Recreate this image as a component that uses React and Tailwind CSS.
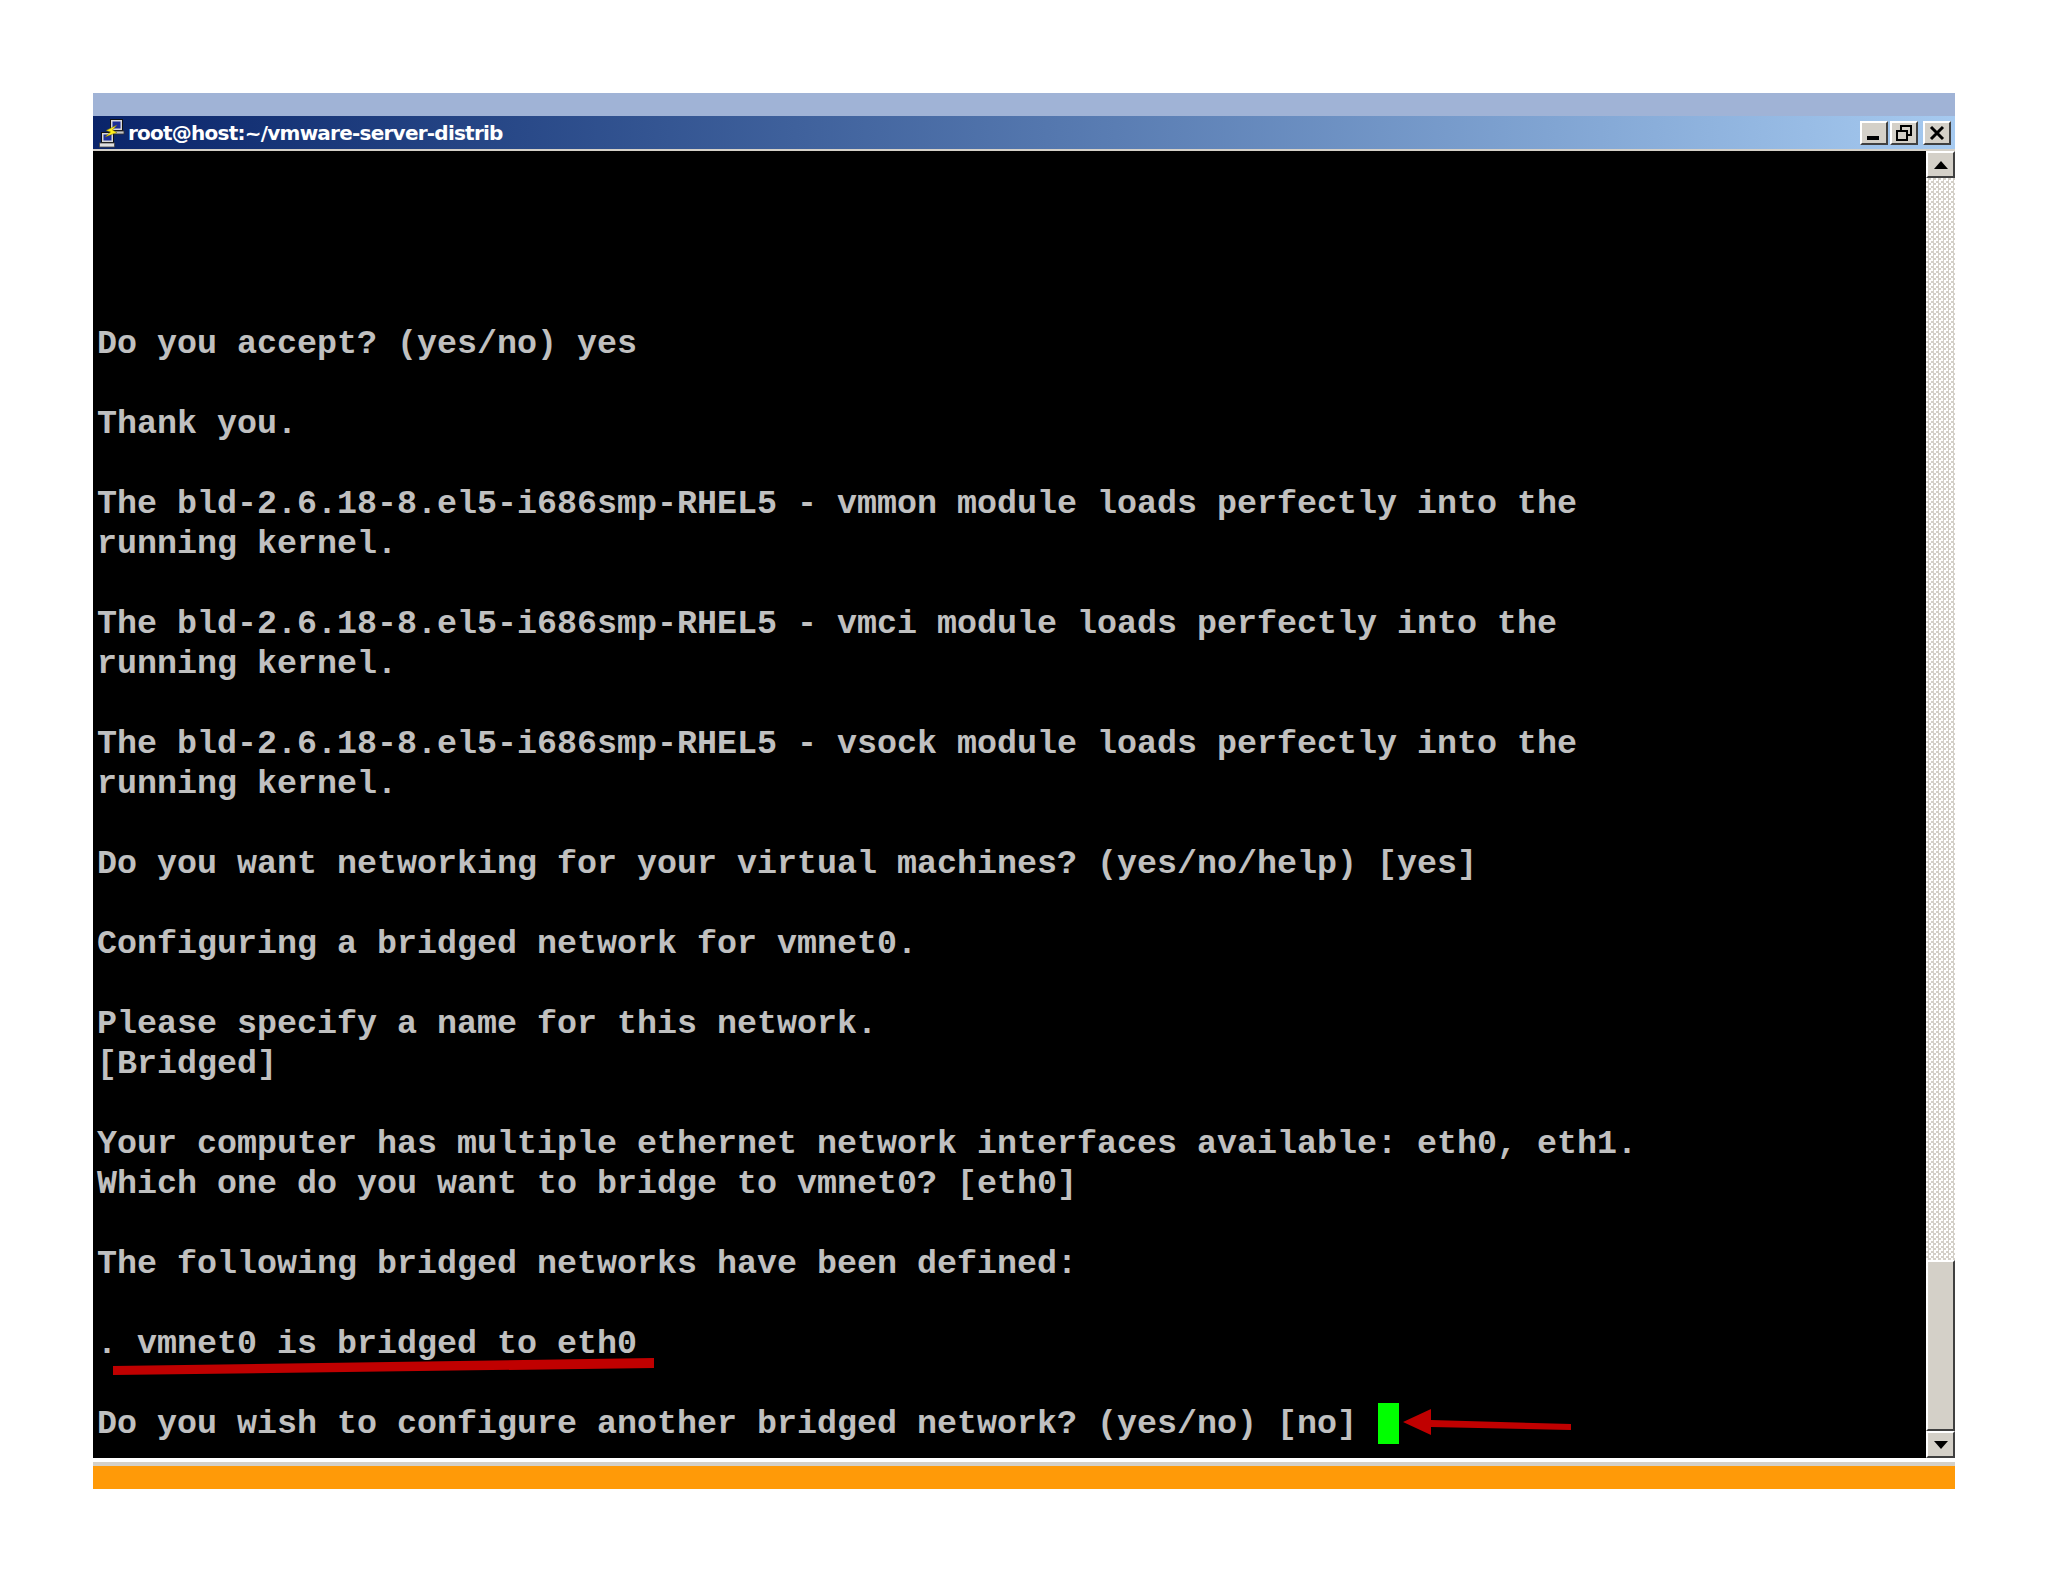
import React from 'react'

const LINES = [
  '', '', '', '',
  'Do you accept? (yes/no) yes',
  '',
  'Thank you.',
  '',
  'The bld-2.6.18-8.el5-i686smp-RHEL5 - vmmon module loads perfectly into the',
  'running kernel.',
  '',
  'The bld-2.6.18-8.el5-i686smp-RHEL5 - vmci module loads perfectly into the',
  'running kernel.',
  '',
  'The bld-2.6.18-8.el5-i686smp-RHEL5 - vsock module loads perfectly into the',
  'running kernel.',
  '',
  'Do you want networking for your virtual machines? (yes/no/help) [yes]',
  '',
  'Configuring a bridged network for vmnet0.',
  '',
  'Please specify a name for this network.',
  '[Bridged]',
  '',
  'Your computer has multiple ethernet network interfaces available: eth0, eth1.',
  'Which one do you want to bridge to vmnet0? [eth0]',
  '',
  'The following bridged networks have been defined:',
  '',
  '. vmnet0 is bridged to eth0',
  '',
]

function PuttyIcon() {
  return (
    <svg width="27" height="30" viewBox="0 0 27 30" className="shrink-0">
      {/* back computer */}
      <rect x="12.5" y="1.5" width="12" height="11" fill="#d8d8d8" stroke="#111" />
      <rect x="14.5" y="3.5" width="8" height="7" fill="#1c2f9a" />
      <rect x="13" y="13" width="13" height="3" fill="#c4c4c4" stroke="#333" strokeWidth="0.8" />
      {/* front computer */}
      <rect x="3.5" y="14.5" width="12" height="10" fill="#d8d8d8" stroke="#111" />
      <rect x="5.5" y="16.5" width="8" height="6" fill="#1c2f9a" />
      <rect x="1.5" y="25" width="15" height="4" fill="#e0e0e0" stroke="#444" strokeWidth="0.8" />
      {/* lightning */}
      <path d="M19 7 L8 12.5 L12.5 14 L7 19 L19 14.5 L14.5 12 Z" fill="#ffee1a" stroke="#6b6010" strokeWidth="0.5" />
    </svg>
  )
}

function WinButton({ children }) {
  return (
    <div className="w-[28px] h-[24px] flex items-center justify-center bg-[#d4d0c8] border-t-2 border-l-2 border-t-white border-l-white border-b-2 border-r-2 border-b-[#404040] border-r-[#404040]">
      {children}
    </div>
  )
}

function ScrollButton({ dir }) {
  return (
    <div className="w-[29px] h-[27px] shrink-0 flex items-center justify-center bg-[#d4d0c8] border-t-2 border-l-2 border-t-white border-l-white border-b-2 border-r-2 border-b-[#404040] border-r-[#404040]">
      <svg width="14" height="8" viewBox="0 0 14 8">
        <path d={dir === 'up' ? 'M7 0 L14 8 L0 8 Z' : 'M0 0 L14 0 L7 8 Z'} fill="#000" />
      </svg>
    </div>
  )
}

export default function App() {
  return (
    <div className="min-h-[1582px] bg-white pt-[93px] pl-[93px]">
      <div className="w-[1862px] flex flex-col">
        <div className="h-[23px] bg-[#a0b3d6]" />

        {/* Title bar */}
        <div className="h-[33px] flex items-center bg-gradient-to-r from-[#0a246a] to-[#a6caf0] pl-[5px] pr-[4px]">
          <PuttyIcon />
          <span className="ml-[3px] text-white font-bold text-[20px] font-['DejaVu_Sans',sans-serif] tracking-[-0.76px] whitespace-pre">root@host:~/vmware-server-distrib</span>
          <div className="ml-auto flex items-center">
            <WinButton>
              <div className="w-[12px] h-[4px] bg-black mt-[10px] -ml-[2px]" />
            </WinButton>
            <div className="ml-[2px]">
              <WinButton>
                <svg width="18" height="18" viewBox="0 0 18 18" fill="none" stroke="#000" strokeWidth="2">
                  <rect x="6" y="2" width="10" height="9" />
                  <rect x="2" y="7" width="10" height="9" fill="#d4d0c8" />
                </svg>
              </WinButton>
            </div>
            <div className="ml-[5px]">
              <WinButton>
                <svg width="16" height="16" viewBox="0 0 16 16" stroke="#000" strokeWidth="3">
                  <path d="M2 2 L14 14 M14 2 L2 14" />
                </svg>
              </WinButton>
            </div>
          </div>
        </div>
        <div className="h-[2px] bg-[#d4d0c8]" />

        {/* Terminal and scrollbar */}
        <div className="h-[1307px] flex">
          <div className="relative flex-1 bg-black pt-[13px] pl-[4px] overflow-hidden font-['Liberation_Mono',monospace] font-bold text-[33.33px] leading-[40px] text-[#c0c0c0]">
            {LINES.map((line, i) => (
              <div key={i} className="h-[40px] whitespace-pre">{line}</div>
            ))}
            <div className="h-[40px] flex whitespace-pre">
              <span>Do you wish to configure another bridged network? (yes/no) [no] </span>
              <span className="w-[21px] h-[41px] -mt-[1px] ml-[1px] bg-[#00ff00]" />
            </div>

            {/* Red annotations */}
            <svg className="absolute left-0 top-0 pointer-events-none" width="1833" height="1307" viewBox="0 0 1833 1307">
              <path d="M20 1215 L561 1207 L561 1217 L20 1224 Z" fill="#c00000" />
              <path d="M1310 1271 L1338 1258 L1338 1269 L1478 1273 L1478 1279 L1338 1276 L1338 1284 Z" fill="#c00000" />
            </svg>
          </div>

          <div className="w-[29px] flex flex-col">
            <ScrollButton dir="up" />
            <div className="flex-1 bg-[#e6e4de] bg-[image:repeating-conic-gradient(#d4d0c8_0_25%,#ffffff_0_50%)] bg-size-[5px_5px]" />
            <div className="h-[171px] shrink-0 bg-[#d4d0c8] border-t-2 border-l-2 border-t-white border-l-white border-b-2 border-r-2 border-b-[#404040] border-r-[#404040]" />
            <ScrollButton dir="down" />
          </div>
        </div>

        <div className="h-[4px] bg-white" />
        <div className="h-[4px] bg-[#d4d0c8]" />
        <div className="h-[23px] bg-[#ff9a08]" />
      </div>
    </div>
  )
}
